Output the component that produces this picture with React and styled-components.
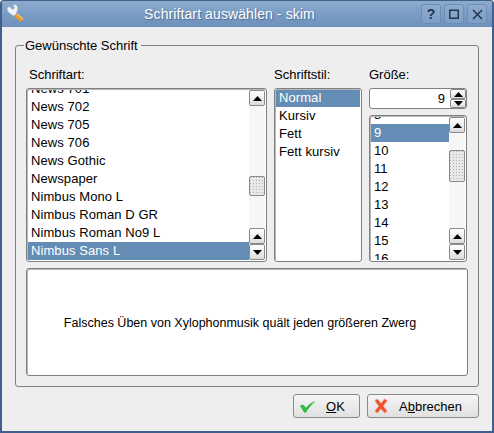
import React from "react"
import styled, { createGlobalStyle } from "styled-components"

const GlobalStyle = createGlobalStyle`
  html, body {
    margin: 0;
    padding: 0;
    background: #eeeeee;
  }
  * {
    box-sizing: border-box;
  }
`

const Window = styled.div`
  width: 494px;
  height: 433px;
  display: flex;
  flex-direction: column;
  background: #eeeeee;
  border: 2px solid #3f5f8c;
  border-top: 1px solid #3f5f8c;
  border-radius: 4px 4px 0 0;
  font-family: "Liberation Sans", Arial, sans-serif;
  font-size: 13px;
  color: #000;
  overflow: hidden;
`

const TitleBar = styled.div`
  height: 26px;
  flex: none;
  display: flex;
  align-items: center;
  padding: 0 5px 0 4px;
  background: linear-gradient(to bottom, #8eabce 0%, #7a9cc4 50%, #6d91bb 100%);
`

const TitleText = styled.div`
  flex: 1;
  text-align: center;
  color: #fff;
  font-size: 14px;
  letter-spacing: 0.1px;
  padding-left: 12px;
  text-shadow: 1px 1px 1px #4a6a94;
`

const TitleButtons = styled.div`
  display: flex;
  gap: 3px;
`

const TitleButton = styled.div`
  width: 20px;
  height: 20px;
  display: flex;
  align-items: center;
  justify-content: center;
  border: 1px solid #6c8eb6;
  border-radius: 3px;
  background: linear-gradient(to bottom, #8fabce, #7c9ec6);
  color: #24344a;
  font-size: 14px;
  font-weight: 700;
`

const Content = styled.div`
  flex: 1;
  display: flex;
  flex-direction: column;
  padding: 11px 13px 0;
`

const Group = styled.fieldset`
  margin: 0;
  padding: 14px 10px 10px;
  height: 349px;
  border: 1px solid #808080;
  border-radius: 3px;
  display: flex;
  flex-direction: column;
  min-width: 0;
`

const GroupTitle = styled.legend`
  padding: 0 3px 0 1px;
  margin-left: -2px;
  line-height: 15px;
`

const Columns = styled.div`
  display: grid;
  grid-template-columns: 241px 88px 98px;
  column-gap: 7px;
  height: 195px;
`

const Column = styled.div`
  display: flex;
  flex-direction: column;
  min-height: 0;
`

const Label = styled.div`
  height: 21px;
  line-height: 16px;
  padding-left: ${({ $inset }) => $inset || 0}px;
  flex: none;
`

const ListFrame = styled.div`
  flex: 1;
  min-height: 0;
  display: flex;
  background: #fff;
  border: 1px solid #808080;
  border-radius: 3px;
  box-shadow: inset 1px 1px 0 #b8b8b8;
  padding: 1px;
  overflow: hidden;
`

const Rows = styled.div`
  flex: 1;
  min-width: 0;
  overflow: hidden;
`

const RowsInner = styled.div`
  margin-top: ${({ $shift }) => $shift || 0}px;
`

const Row = styled.div`
  height: 18px;
  line-height: 18px;
  padding-left: 3px;
  white-space: nowrap;
  letter-spacing: 0.08px;
  background: ${({ $selected }) => ($selected ? "#648db5" : "transparent")};
  color: ${({ $selected }) => ($selected ? "#fff" : "#000")};
`

const Scrollbar = styled.div`
  width: 16px;
  flex: none;
  display: flex;
  flex-direction: column;
  background-color: #f6f6f6;
  background-image: radial-gradient(#dddddd 0.5px, transparent 0.6px);
  background-size: 2px 2px;
`

const Track = styled.div`
  flex: 1;
  padding-top: ${({ $offset }) => $offset}px;
`

const Thumb = styled.div`
  height: ${({ $size }) => $size}px;
  border: 1px solid #8a8a8a;
  border-radius: 2px;
  background-color: #e8e8e8;
  background-image: radial-gradient(#b4b4b4 0.7px, transparent 0.8px);
  background-size: 3px 3px;
  background-position: 2px 2px;
`

const ArrowButton = styled.div`
  height: ${({ $height }) => $height || 16}px;
  flex: none;
  display: flex;
  align-items: center;
  justify-content: center;
  border: 1px solid #8a8a8a;
  border-radius: 2px;
  background: linear-gradient(to bottom, #ffffff, #dcdcdc);
`

const Spin = styled.div`
  height: 21px;
  display: flex;
  flex: none;
  margin-bottom: 6px;
  background: #fff;
  border: 1px solid #808080;
  border-radius: 3px;
  overflow: hidden;
`

const SpinValue = styled.div`
  flex: 1;
  text-align: right;
  padding-right: 5px;
  line-height: 19px;
`

const SpinButtons = styled.div`
  width: 16px;
  display: flex;
  flex-direction: column;
`

const Preview = styled.div`
  height: 108px;
  margin-top: 6px;
  padding: 1px 14px 0 0;
  display: flex;
  align-items: center;
  justify-content: center;
  font-size: 12.5px;
  background: #fff;
  border: 1px solid #808080;
  border-radius: 3px;
  box-shadow: inset 1px 1px 0 #b8b8b8;
`

const Footer = styled.div`
  display: flex;
  justify-content: flex-end;
  gap: 7px;
  margin-top: 7px;
`

const Button = styled.div`
  width: ${({ $width }) => $width}px;
  height: 24px;
  display: flex;
  align-items: center;
  padding-left: 5px;
  border: 1px solid #8a8a8a;
  border-radius: 3px;
  background: linear-gradient(to bottom, #f6f6f6, #e0e0e0);
`

const ButtonLabel = styled.span`
  flex: 1;
  text-align: center;
  padding-right: ${({ $pad }) => $pad || 0}px;
`

const Arrow = ({ down }) => (
  <svg width="9" height="5" viewBox="0 0 9 5">
    <path d={down ? "M0 0h9L4.5 5z" : "M4.5 0L9 5H0z"} fill="#000" />
  </svg>
)

const WrenchIcon = () => (
  <svg width="20" height="20" viewBox="0 0 20 20">
    <path d="M10 10l7 6-2 2-7-6z" fill="#f29a1e" />
    <path d="M11 10l6 5" stroke="#ffc75e" strokeWidth="1.2" />
    <path
      d="M3 2.5L6.5 5.5 9 4 7 1.5C9-.2 11.5 1.5 11.5 4c0 1.500-.5 3-.5 3L10 10 8 11.500C5 11 2 8 1.500 6 1.200 4.800 2 3 3 2.500z"
      fill="#f1f1f6"
      stroke="#c8cfdc"
      strokeWidth=".5"
    />
  </svg>
)

const CheckIcon = () => (
  <svg width="17" height="13" viewBox="0 0 20 16">
    <path d="M1 7l4-1 3 4C11 6 15 3 19 2 15 5 11 10 8 15H6z" fill="#2fc13f" stroke="#1a9a2c" strokeWidth=".5" />
  </svg>
)

const CrossIcon = () => (
  <svg width="16" height="16" viewBox="0 0 18 18">
    <path d="M2 3l3-2 4 5 4-5 3 2-4.500 6L16 15l-3 2-4-5-4 5-3-2 4.500-6z" fill="#f0502a" stroke="#f7a088" strokeWidth=".7" />
  </svg>
)

const CloseGlyph = () => (
  <svg width="11" height="11" viewBox="0 0 11 11">
    <path d="M1 1l9 9M10 1l-9 9" stroke="#24344a" strokeWidth="1.5" />
  </svg>
)

const MaxGlyph = () => (
  <svg width="10" height="10" viewBox="0 0 10 10">
    <path d="M.75 1.250h8.500v8H.75z" fill="none" stroke="#24344a" strokeWidth="1.500" />
  </svg>
)

const ScrollColumn = ({ thumbOffset, thumbSize }) => (
  <Scrollbar>
    <ArrowButton><Arrow /></ArrowButton>
    <Track $offset={thumbOffset}>
      <Thumb $size={thumbSize} />
    </Track>
    <ArrowButton><Arrow /></ArrowButton>
    <ArrowButton><Arrow down /></ArrowButton>
  </Scrollbar>
)

const fonts = [
  "News 701",
  "News 702",
  "News 705",
  "News 706",
  "News Gothic",
  "Newspaper",
  "Nimbus Mono L",
  "Nimbus Roman D GR",
  "Nimbus Roman No9 L",
  "Nimbus Sans L",
]
const styles = ["Normal", "Kursiv", "Fett", "Fett kursiv"]
const sizes = ["8", "9", "10", "11", "12", "13", "14", "15", "16"]

export default function App() {
  return (
    <>
      <GlobalStyle />
      <Window>
        <TitleBar>
          <WrenchIcon />
          <TitleText>Schriftart auswählen - skim</TitleText>
          <TitleButtons>
            <TitleButton>?</TitleButton>
            <TitleButton>
              <MaxGlyph />
            </TitleButton>
            <TitleButton>
              <CloseGlyph />
            </TitleButton>
          </TitleButtons>
        </TitleBar>
        <Content>
          <Group>
            <GroupTitle>Gewünschte Schrift</GroupTitle>
            <Columns>
              <Column>
                <Label $inset={3}>Schriftart:</Label>
                <ListFrame>
                  <Rows>
                    <RowsInner $shift={-10}>
                      {fonts.map((name) => (
                        <Row key={name} $selected={name === "Nimbus Sans L"}>{name}</Row>
                      ))}
                    </RowsInner>
                  </Rows>
                  <ScrollColumn thumbOffset={70} thumbSize={20} />
                </ListFrame>
              </Column>
              <Column>
                <Label>Schriftstil:</Label>
                <ListFrame>
                  <Rows>
                    <RowsInner $shift={-1}>
                      {styles.map((name) => (
                        <Row key={name} $selected={name === "Normal"}>{name}</Row>
                      ))}
                    </RowsInner>
                  </Rows>
                </ListFrame>
              </Column>
              <Column>
                <Label>Größe:</Label>
                <Spin>
                  <SpinValue>9</SpinValue>
                  <SpinButtons>
                    <ArrowButton $height={10}><Arrow /></ArrowButton>
                    <ArrowButton $height={9}><Arrow down /></ArrowButton>
                  </SpinButtons>
                </Spin>
                <ListFrame>
                  <Rows>
                    <RowsInner $shift={-11}>
                      {sizes.map((size) => (
                        <Row key={size} $selected={size === "9"}>{size}</Row>
                      ))}
                    </RowsInner>
                  </Rows>
                  <ScrollColumn thumbOffset={17} thumbSize={32} />
                </ListFrame>
              </Column>
            </Columns>
            <Preview>Falsches Üben von Xylophonmusik quält jeden größeren Zwerg</Preview>
          </Group>
          <Footer>
            <Button $width={67}>
              <CheckIcon />
              <ButtonLabel $pad={4}>
                <u>O</u>K
              </ButtonLabel>
            </Button>
            <Button $width={112}>
              <CrossIcon />
              <ButtonLabel $pad={6}>
                A<u>b</u>brechen
              </ButtonLabel>
            </Button>
          </Footer>
        </Content>
      </Window>
    </>
  )
}
